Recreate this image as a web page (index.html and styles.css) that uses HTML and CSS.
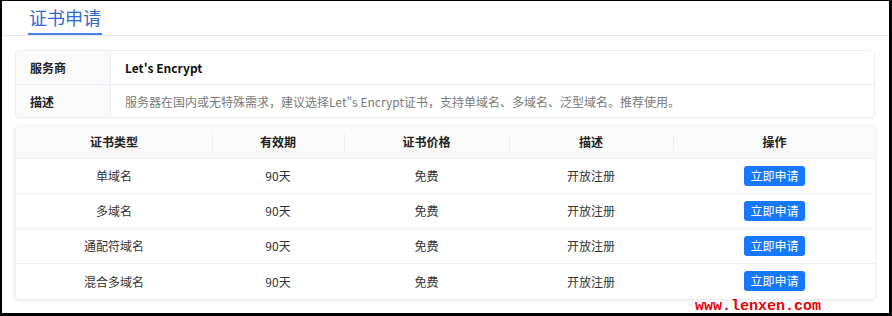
FILE: index.html
```html
<!DOCTYPE html>
<html lang="zh-CN">
<head>
<meta charset="utf-8">
<title>证书申请</title>
<link rel="stylesheet" href="styles.css">
</head>
<body>
<div class="page">
  <div class="tabs">
    <div class="tab">证书申请</div>
  </div>
  <div class="content">
    <div class="desc">
      <div class="desc-row">
        <div class="desc-label">服务商</div>
        <div class="desc-value strong">Let's Encrypt</div>
      </div>
      <div class="desc-row">
        <div class="desc-label">描述</div>
        <div class="desc-value muted">服务器在国内或无特殊需求，建议选择Let"s Encrypt证书，支持单域名、多域名、泛型域名。推荐使用。</div>
      </div>
    </div>
    <div class="table-wrap">
      <table class="tbl">
        <colgroup>
          <col class="c1"><col class="c2"><col class="c3"><col class="c4"><col class="c5">
        </colgroup>
        <thead>
          <tr><th>证书类型</th><th>有效期</th><th>证书价格</th><th>描述</th><th>操作</th></tr>
        </thead>
        <tbody>
          <tr><td>单域名</td><td>90天</td><td>免费</td><td>开放注册</td><td><button class="btn">立即申请</button></td></tr>
          <tr><td>多域名</td><td>90天</td><td>免费</td><td>开放注册</td><td><button class="btn">立即申请</button></td></tr>
          <tr><td>通配符域名</td><td>90天</td><td>免费</td><td>开放注册</td><td><button class="btn">立即申请</button></td></tr>
          <tr><td>混合多域名</td><td>90天</td><td>免费</td><td>开放注册</td><td><button class="btn">立即申请</button></td></tr>
        </tbody>
      </table>
    </div>
  </div>
  <div class="watermark">www.lenxen.com</div>
</div>
</body>
</html>
```
FILE: styles.css
```css
* { box-sizing: border-box; }
html, body { margin: 0; padding: 0; background: #000; }
body {
  font-family: "Noto Sans CJK SC", "Noto Sans", sans-serif;
  font-size: 12px;
  color: #333;
}
.page {
  position: relative;
  width: 892px;
  height: 316px;
  background: #fff;
  border-style: solid;
  border-color: #000;
  border-width: 1px 3px 3px 2px;
  overflow: hidden;
}
.tabs {
  height: 35px;
  border-bottom: 1px solid #e4e7ed;
  padding-left: 26px;
  display: flex;
}
.tab {
  height: 34px;
  display: flex;
  align-items: center;
  padding: 0 1px 1px;
  font-size: 18px;
  color: #2f68d8;
  border-bottom: 2px solid #4a7fe3;
  margin-bottom: -1px;
}
.content {
  padding: 14px 14px 0 13px;
}
.desc {
  border: 1px solid #ebeef5;
  border-radius: 4px;
  overflow: hidden;
  box-shadow: 0 1px 2px rgba(0,0,0,0.04);
}
.desc-row {
  display: flex;
  height: 33px;
}
.desc-row + .desc-row { border-top: 1px solid #ebeef5; height: 33px; }
.desc-label {
  width: 95px;
  flex: none;
  background: #fafafa;
  border-right: 1px solid #ebeef5;
  padding-left: 14px;
  display: flex;
  align-items: center;
  font-weight: bold;
  color: #222;
}
.desc-value {
  padding-left: 14px;
  display: flex;
  align-items: center;
}
.strong { font-weight: bold; color: #111; }
.muted { color: #7a7a7a; }
.table-wrap {
  margin-top: 8px;
  border-radius: 4px;
  overflow: hidden;
  box-shadow: 0 1px 4px rgba(0,0,0,0.12);
  border-left: 1px solid #eceef2;
}
.tbl {
  width: 100%;
  border-collapse: collapse;
  table-layout: fixed;
}
.c1 { width: 196px; }
.c2 { width: 132px; }
.c3 { width: 165px; }
.c4 { width: 164px; }
.c5 { width: 203px; }
.tbl th {
  position: relative;
  height: 32px;
  background: #fafafa;
  font-weight: bold;
  color: #222;
  text-align: center;
  padding: 0;
  border-bottom: 1px solid #f0f0f0;
}
.tbl th + th::before {
  content: "";
  position: absolute;
  left: 0;
  top: 8px;
  width: 1px;
  height: 17px;
  background: #ececec;
}
.tbl td {
  height: 35px;
  text-align: center;
  padding: 0;
  border-bottom: 1px solid #f0f0f0;
  color: #333;
}
.tbl tbody tr:last-child td { border-bottom: none; height: 36px; }
.btn {
  font-family: inherit;
  font-size: 12px;
  color: #fff;
  background: #1677ff;
  border: none;
  border-radius: 3px;
  height: 20px;
  width: 61px;
  padding: 0;
  line-height: 20px;
  cursor: pointer;
}
.watermark {
  position: absolute;
  left: 693px;
  top: 298px;
  font-family: "Liberation Mono", "DejaVu Sans Mono", monospace;
  font-weight: bold;
  font-size: 15px;
  line-height: 15px;
  color: #e8000a;
}
```
